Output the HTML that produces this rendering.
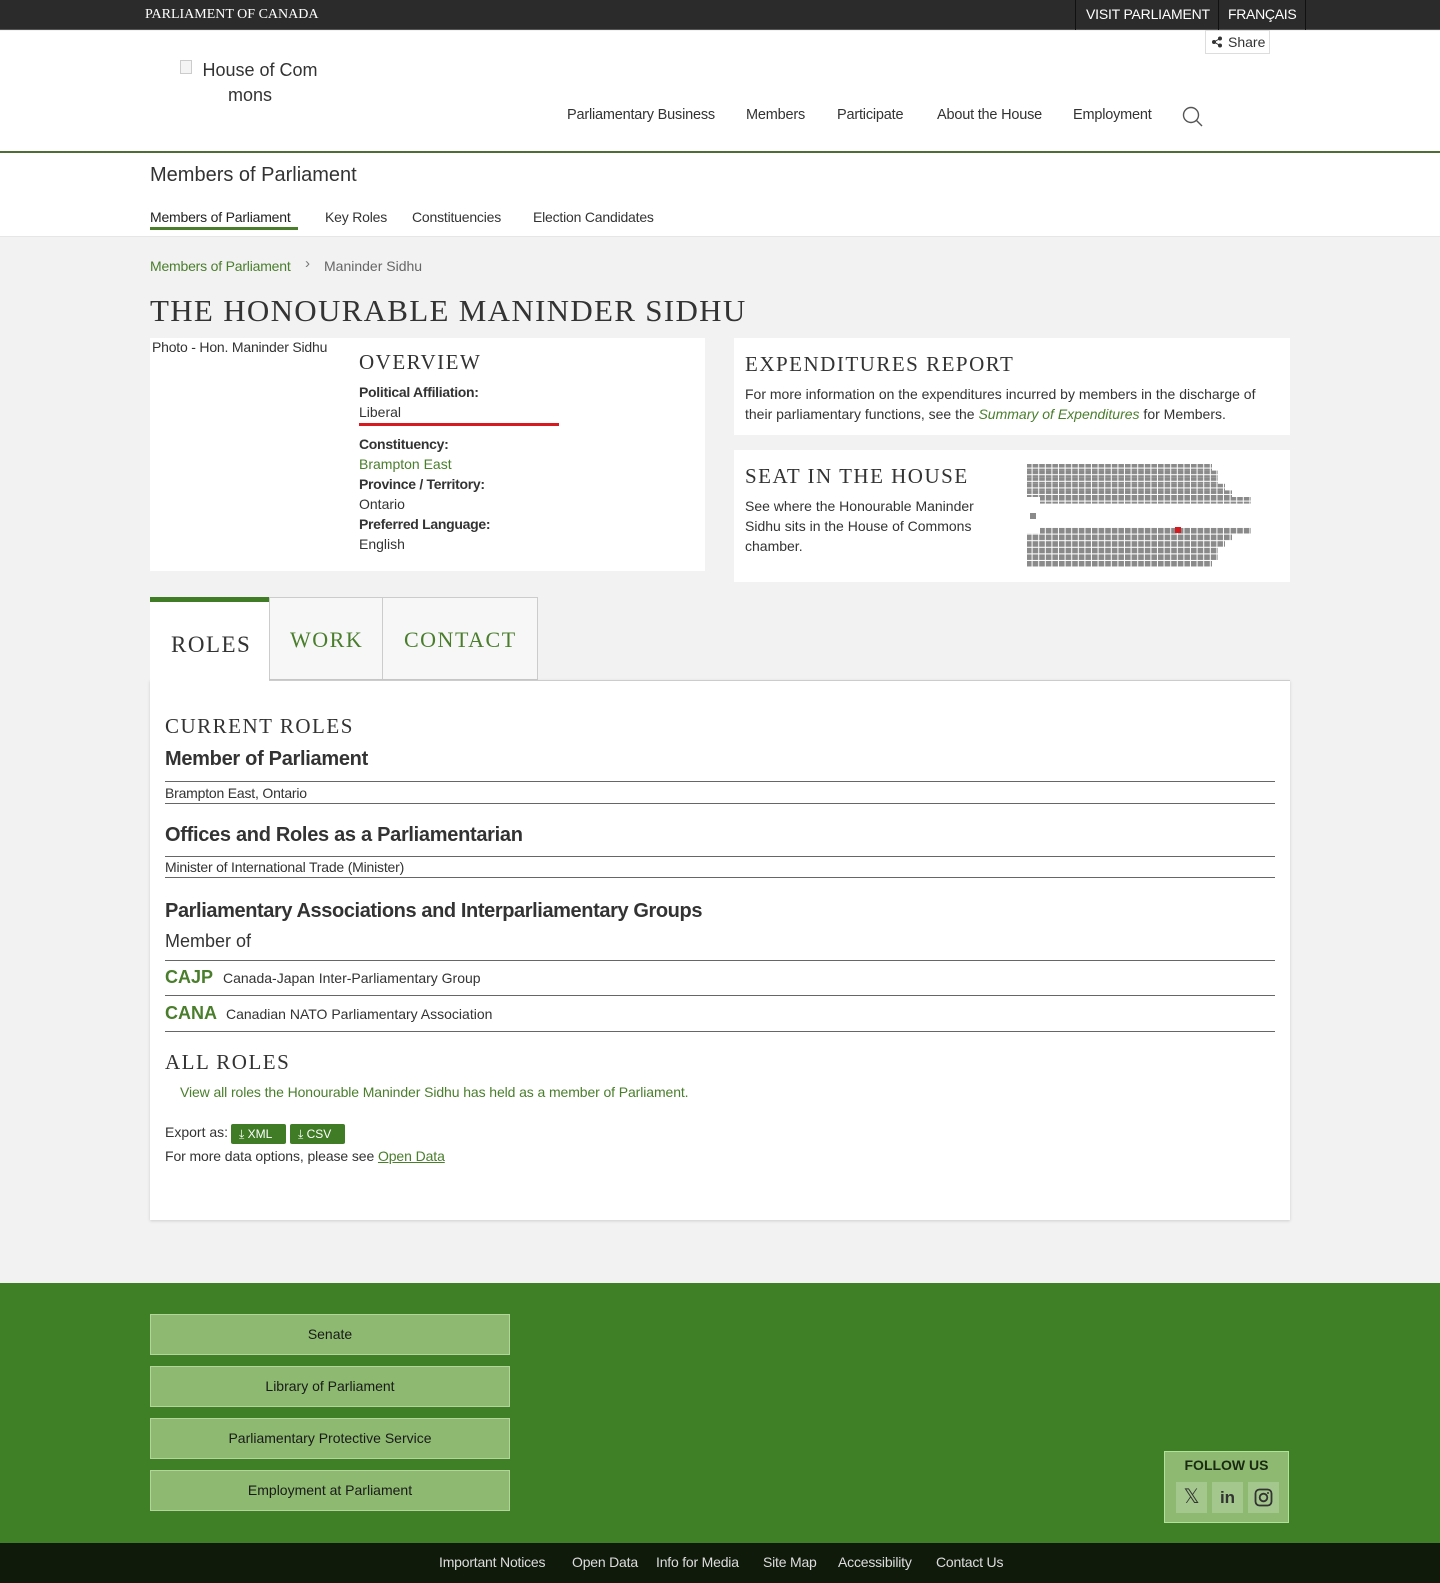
<!DOCTYPE html>
<html><head><meta charset="utf-8">
<style>
*{margin:0;padding:0;box-sizing:border-box}
body{width:1440px;height:1583px;position:relative;background:#f2f2f2;font-family:"Liberation Sans",sans-serif;color:#333;overflow:hidden}
.a{position:absolute;white-space:nowrap}
.serif{font-family:"Liberation Serif",serif;letter-spacing:1.5px}
.g{color:#4a7e2c}
.line{position:absolute;left:165px;width:1110px;height:1px;background:#666}
</style></head><body>
<div class="a" style="left:0;top:0;width:1440px;height:30px;background:#2b2b2b;border-bottom:1px solid #555"></div>
<div class="a serif" style="left:145px;top:7px;font-size:14px;color:#fff;letter-spacing:0">PARLIAMENT OF CANADA</div>
<div class="a" style="left:1075px;top:0;width:144px;height:30px;border-left:1px solid #111;border-right:1px solid #111"></div>
<div class="a" style="left:1218px;top:0;width:88px;height:30px;border-right:1px solid #111"></div>
<div class="a" style="left:1086px;top:6px;font-size:14px;color:#fff;letter-spacing:-0.2px">VISIT PARLIAMENT</div>
<div class="a" style="left:1228px;top:6px;font-size:14px;color:#fff;letter-spacing:-0.3px">FRANÇAIS</div>
<div class="a" style="left:0;top:31px;width:1440px;height:121px;background:#fff"></div>
<div class="a" style="left:1205px;top:30px;width:65px;height:24px;border:1px solid #ddd;background:#fff;font-size:14px;padding:3px 0 0 22px;color:#333">Share</div>
<svg class="a" style="left:1211px;top:36px" width="12" height="12" viewBox="0 0 12 12"><circle cx="9" cy="2.5" r="2" fill="#333"/><circle cx="3" cy="6" r="2" fill="#333"/><circle cx="9" cy="9.5" r="2" fill="#333"/><path d="M9 2.5L3 6L9 9.5" stroke="#333" fill="none"/></svg>
<div class="a" style="left:180px;top:60px;width:12px;height:14px;border:1px solid #ccc;background:#f4f4f4"></div>
<div class="a" style="left:180px;top:58px;width:140px;text-align:center;font-size:18px;line-height:25px;white-space:normal;padding-left:20px">House of Com<br><span style="margin-left:-20px">mons</span></div>
<div class="a" style="left:567px;top:107px;font-size:14.5px;letter-spacing:-0.2px">Parliamentary Business</div>
<div class="a" style="left:746px;top:107px;font-size:14.5px;letter-spacing:-0.2px">Members</div>
<div class="a" style="left:837px;top:107px;font-size:14.5px;letter-spacing:-0.2px">Participate</div>
<div class="a" style="left:937px;top:107px;font-size:14.5px;letter-spacing:-0.2px">About the House</div>
<div class="a" style="left:1073px;top:107px;font-size:14.5px;letter-spacing:-0.2px">Employment</div>
<svg class="a" style="left:1182px;top:106px" width="22" height="22" viewBox="0 0 22 22"><circle cx="9" cy="9" r="7.5" stroke="#555" stroke-width="1.4" fill="none"/><path d="M14.5 14.5L20 20" stroke="#555" stroke-width="1.4"/></svg>
<div class="a" style="left:0;top:151px;width:1440px;height:2px;background:#4f6e35"></div>
<div class="a" style="left:0;top:153px;width:1440px;height:84px;background:#fff;border-bottom:1px solid #e6e6e6"></div>
<div class="a" style="left:150px;top:164px;font-size:20px;color:#333">Members of Parliament</div>
<div class="a" style="left:150px;top:209px;font-size:14px;color:#222;letter-spacing:-0.2px">Members of Parliament</div>
<div class="a" style="left:150px;top:227px;width:148px;height:3px;background:#4a7e2c"></div>
<div class="a" style="left:325px;top:209px;font-size:14px;letter-spacing:-0.2px">Key Roles</div>
<div class="a" style="left:412px;top:209px;font-size:14px;letter-spacing:-0.2px">Constituencies</div>
<div class="a" style="left:533px;top:209px;font-size:14px;letter-spacing:-0.2px">Election Candidates</div>
<div class="a g" style="left:150px;top:258px;font-size:14px;letter-spacing:-0.2px">Members of Parliament</div>
<div class="a" style="left:305px;top:255px;font-size:15px;color:#777">›</div>
<div class="a" style="left:324px;top:258px;font-size:14px;color:#666">Maninder Sidhu</div>
<div class="a serif" style="left:150px;top:293px;font-size:31px;color:#333;letter-spacing:1.3px">THE HONOURABLE MANINDER SIDHU</div>
<div class="a" style="left:150px;top:338px;width:555px;height:233px;background:#fff"></div>
<div class="a" style="left:152px;top:339px;font-size:14px;color:#333;letter-spacing:-0.2px">Photo - Hon. Maninder Sidhu</div>
<div class="a serif" style="left:359px;top:350px;font-size:21px;color:#333">OVERVIEW</div>
<div class="a" style="left:359px;top:384px;font-size:14px;font-weight:bold;letter-spacing:-0.3px">Political Affiliation:</div>
<div class="a" style="left:359px;top:404px;font-size:14px">Liberal</div>
<div class="a" style="left:359px;top:423px;width:200px;height:3px;background:#d71920"></div>
<div class="a" style="left:359px;top:436px;font-size:14px;font-weight:bold;letter-spacing:-0.3px">Constituency:</div>
<div class="a g" style="left:359px;top:456px;font-size:14px">Brampton East</div>
<div class="a" style="left:359px;top:476px;font-size:14px;font-weight:bold;letter-spacing:-0.3px">Province / Territory:</div>
<div class="a" style="left:359px;top:496px;font-size:14px">Ontario</div>
<div class="a" style="left:359px;top:516px;font-size:14px;font-weight:bold;letter-spacing:-0.3px">Preferred Language:</div>
<div class="a" style="left:359px;top:536px;font-size:14px">English</div>
<div class="a" style="left:734px;top:338px;width:556px;height:97px;background:#fff"></div>
<div class="a serif" style="left:745px;top:352px;font-size:21px">EXPENDITURES REPORT</div>
<div class="a" style="left:745px;top:384px;font-size:14px;line-height:20px;white-space:normal;width:530px">For more information on the expenditures incurred by members in the discharge of their parliamentary functions, see the <i class="g">Summary of Expenditures</i> for Members.</div>
<div class="a" style="left:734px;top:450px;width:556px;height:132px;background:#fff"></div>
<div class="a serif" style="left:745px;top:464px;font-size:21px">SEAT IN THE HOUSE</div>
<div class="a" style="left:745px;top:496px;font-size:14px;line-height:20px;white-space:normal;width:240px">See where the Honourable Maninder Sidhu sits in the House of Commons chamber.</div>
<svg class="a" style="left:1026px;top:462px" width="230" height="110">
<defs><pattern id="p" width="6.6" height="6.6" patternUnits="userSpaceOnUse"><rect width="5.6" height="5.6" fill="#8a8a8a"/></pattern></defs>
<rect x="1" y="2" width="185" height="6.6" fill="url(#p)"/>
<rect x="1" y="8.6" width="191" height="6.6" fill="url(#p)"/>
<rect x="1" y="15.2" width="191" height="6.6" fill="url(#p)"/>
<rect x="1" y="21.8" width="198" height="6.6" fill="url(#p)"/>
<rect x="1" y="28.4" width="205" height="6.6" fill="url(#p)"/>
<rect x="14" y="35" width="211" height="6.6" fill="url(#p)"/>
<rect x="4" y="51" width="6" height="6" fill="#8a8a8a"/>
<rect x="14" y="65" width="211" height="6.6" fill="url(#p)"/>
<rect x="1" y="71.6" width="205" height="6.6" fill="url(#p)"/>
<rect x="1" y="78.2" width="198" height="6.6" fill="url(#p)"/>
<rect x="1" y="84.8" width="191" height="6.6" fill="url(#p)"/>
<rect x="1" y="91.4" width="191" height="6.6" fill="url(#p)"/>
<rect x="1" y="98" width="185" height="6.6" fill="url(#p)"/>
<rect x="149" y="65" width="6" height="6" fill="#d71920"/>
</svg>
<div class="a" style="left:150px;top:597px;width:119px;height:84px;background:#fff;border-top:5px solid #3f7c25;z-index:2"></div>
<div class="a serif" style="left:171px;top:632px;font-size:23px;z-index:3">ROLES</div>
<div class="a" style="left:269px;top:597px;width:114px;height:83px;background:#f7f7f7;border:1px solid #ccc"></div>
<div class="a serif g" style="left:290px;top:627px;font-size:22px">WORK</div>
<div class="a" style="left:382px;top:597px;width:156px;height:83px;background:#f7f7f7;border:1px solid #ccc"></div>
<div class="a serif g" style="left:404px;top:627px;font-size:22px">CONTACT</div>
<div class="a" style="left:150px;top:680px;width:1140px;height:540px;background:#fff;box-shadow:0 1px 3px rgba(0,0,0,.15);border-top:1px solid #ccc"></div>
<div class="a serif" style="left:165px;top:714px;font-size:21px">CURRENT ROLES</div>
<div class="a" style="left:165px;top:748px;font-size:20px;font-weight:bold;color:#333;letter-spacing:-0.3px">Member of Parliament</div>
<div class="line" style="top:781px"></div>
<div class="a" style="left:165px;top:785px;font-size:14px;letter-spacing:-0.2px">Brampton East, Ontario</div>
<div class="line" style="top:803px"></div>
<div class="a" style="left:165px;top:824px;font-size:20px;font-weight:bold;letter-spacing:-0.3px">Offices and Roles as a Parliamentarian</div>
<div class="line" style="top:856px"></div>
<div class="a" style="left:165px;top:859px;font-size:14px;letter-spacing:-0.2px">Minister of International Trade (Minister)</div>
<div class="line" style="top:877px"></div>
<div class="a" style="left:165px;top:900px;font-size:20px;font-weight:bold;letter-spacing:-0.4px">Parliamentary Associations and Interparliamentary Groups</div>
<div class="a" style="left:165px;top:931px;font-size:18px">Member of</div>
<div class="line" style="top:960px"></div>
<div class="a g" style="left:165px;top:967px;font-size:18px;font-weight:bold">CAJP</div>
<div class="a" style="left:223px;top:970px;font-size:14px">Canada-Japan Inter-Parliamentary Group</div>
<div class="line" style="top:995px"></div>
<div class="a g" style="left:165px;top:1003px;font-size:18px;font-weight:bold">CANA</div>
<div class="a" style="left:226px;top:1006px;font-size:14px">Canadian NATO Parliamentary Association</div>
<div class="line" style="top:1031px"></div>
<div class="a serif" style="left:165px;top:1050px;font-size:21px">ALL ROLES</div>
<div class="a g" style="left:180px;top:1084px;font-size:14px;letter-spacing:-0.1px">View all roles the Honourable Maninder Sidhu has held as a member of Parliament.</div>
<div class="a" style="left:165px;top:1124px;font-size:14px">Export as:</div>
<div class="a" style="left:231px;top:1124px;width:55px;height:20px;background:#3f7c25;border-radius:2px;color:#fff;font-size:12px;padding:3px 0 0 8px">⤓ XML</div>
<div class="a" style="left:290px;top:1124px;width:55px;height:20px;background:#3f7c25;border-radius:2px;color:#fff;font-size:12px;padding:3px 0 0 8px">⤓ CSV</div>
<div class="a" style="left:165px;top:1148px;font-size:14px;letter-spacing:-0.1px">For more data options, please see <span class="g" style="text-decoration:underline">Open Data</span></div>
<div class="a" style="left:0;top:1283px;width:1440px;height:260px;background:#3f7f25"></div>
<div class="a" style="left:150px;top:1314px;width:360px;height:41px;background:#8db970;border:1px solid #b3d49b;text-align:center;line-height:39px;font-size:14px;color:#1a1a1a">Senate</div>
<div class="a" style="left:150px;top:1366px;width:360px;height:41px;background:#8db970;border:1px solid #b3d49b;text-align:center;line-height:39px;font-size:14px;color:#1a1a1a">Library of Parliament</div>
<div class="a" style="left:150px;top:1418px;width:360px;height:41px;background:#8db970;border:1px solid #b3d49b;text-align:center;line-height:39px;font-size:14px;color:#1a1a1a">Parliamentary Protective Service</div>
<div class="a" style="left:150px;top:1470px;width:360px;height:41px;background:#8db970;border:1px solid #b3d49b;text-align:center;line-height:39px;font-size:14px;color:#1a1a1a">Employment at Parliament</div>
<div class="a" style="left:1164px;top:1451px;width:125px;height:72px;background:#8db970;border:1px solid #b3e09b"></div>
<div class="a" style="left:1164px;top:1457px;width:125px;text-align:center;font-size:14px;font-weight:bold;color:#1a2a12">FOLLOW US</div>
<div class="a" style="left:1176px;top:1482px;width:31px;height:31px;background:#a3c78c;text-align:center;line-height:31px;font-size:20px;color:#333">𝕏</div>
<div class="a" style="left:1212px;top:1482px;width:31px;height:31px;background:#a3c78c;text-align:center;line-height:31px;font-size:17px;font-weight:bold;color:#333">in</div>
<div class="a" style="left:1248px;top:1482px;width:31px;height:31px;background:#a3c78c"></div>
<svg class="a" style="left:1254px;top:1488px" width="19" height="19" viewBox="0 0 19 19"><rect x="1.5" y="1.5" width="16" height="16" rx="4" stroke="#333" stroke-width="1.8" fill="none"/><circle cx="9.5" cy="9.5" r="3.8" stroke="#333" stroke-width="1.8" fill="none"/><circle cx="14" cy="5" r="1" fill="#333"/></svg>
<div class="a" style="left:0;top:1543px;width:1440px;height:40px;background:#0f1a0b"></div>
<div class="a" style="left:439px;top:1554px;font-size:14px;color:#ddd;letter-spacing:-0.2px">Important Notices</div>
<div class="a" style="left:572px;top:1554px;font-size:14px;color:#ddd;letter-spacing:-0.2px">Open Data</div>
<div class="a" style="left:656px;top:1554px;font-size:14px;color:#ddd;letter-spacing:-0.2px">Info for Media</div>
<div class="a" style="left:763px;top:1554px;font-size:14px;color:#ddd;letter-spacing:-0.2px">Site Map</div>
<div class="a" style="left:838px;top:1554px;font-size:14px;color:#ddd;letter-spacing:-0.2px">Accessibility</div>
<div class="a" style="left:936px;top:1554px;font-size:14px;color:#ddd;letter-spacing:-0.2px">Contact Us</div>
</body></html>
